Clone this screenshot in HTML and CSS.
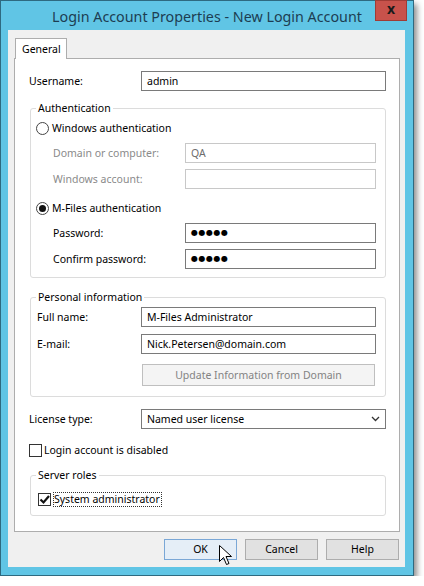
FILE: index.html
```html
<!DOCTYPE html>
<html lang="en">
<head>
  <meta charset="UTF-8" />
  <title>Login Account Properties - New Login Account</title>
  <link rel="stylesheet" href="styles.css">
</head>
<body>
  <div class="window">
    <div class="titlebar">
      <span class="title">Login Account Properties - New Login Account</span>
      <div class="close">x</div>
    </div>

    <div class="client">
      <div class="tabs"><div class="tab">General</div></div>

      <div class="panel">
        <div class="row">
          <span class="lbl">Username:</span>
          <div class="field">admin</div>
        </div>

        <div class="group auth">
          <div class="legend">Authentication</div>
          <div class="opt"><span class="radio"></span>Windows authentication</div>
          <div class="row sub off first">
            <span class="lbl">Domain or computer:</span>
            <div class="field">QA</div>
          </div>
          <div class="row sub off">
            <span class="lbl">Windows account:</span>
            <div class="field"></div>
          </div>
          <div class="opt second"><span class="radio on"></span>M-Files authentication</div>
          <div class="row sub first">
            <span class="lbl">Password:</span>
            <div class="field dots">●●●●●</div>
          </div>
          <div class="row sub">
            <span class="lbl">Confirm password:</span>
            <div class="field dots">●●●●●</div>
          </div>
        </div>

        <div class="group personal">
          <div class="legend">Personal information</div>
          <div class="row inner first">
            <span class="lbl">Full name:</span>
            <div class="field">M-Files Administrator</div>
          </div>
          <div class="row inner">
            <span class="lbl">E-mail:</span>
            <div class="field">Nick.Petersen@domain.com</div>
          </div>
          <div class="btn wide">Update Information from Domain</div>
        </div>

        <div class="row license">
          <span class="lbl">License type:</span>
          <div class="field select">
            Named user license
            <svg width="9" height="6" viewBox="0 0 9 6"><path d="M1 1l3.5 3.5L8 1" fill="none" stroke="#333" stroke-width="1.3"/></svg>
          </div>
        </div>

        <div class="check-row">
          <span class="box"></span>Login account is disabled
        </div>

        <div class="group roles">
          <div class="legend">Server roles</div>
          <div class="check-row inner-check">
            <span class="box">
              <svg width="11" height="11" viewBox="0 0 11 11"><path d="M1.5 5.5l3 3L10 2" fill="none" stroke="#111" stroke-width="2.2"/></svg>
            </span><span class="focus">System administrator</span>
          </div>
        </div>
      </div>

      <div class="buttons">
        <div class="btn ok">OK
          <svg class="cursor" width="13" height="21" viewBox="0 0 13 21"><path d="M0.5 0.5v16l4-4 3 7 2.5-1-3-7h5.5z" fill="#fff" stroke="#000" stroke-width="1"/></svg>
        </div>
        <div class="btn">Cancel</div>
        <div class="btn">Help</div>
      </div>
    </div>
  </div>
</body>
</html>
```

FILE: styles.css
```css
* { box-sizing: border-box; }
body {
  margin: 0;
  background: #fff;
  font-family: "Noto Sans", "Segoe UI", sans-serif;
  font-size: 10.5px;
  color: #000;
}
.window {
  width: 414px;
  height: 576px;
  border: 1px solid #2e6a80;
  background: #60c5e5;
  box-shadow: 3px 4px 6px rgba(0, 0, 0, 0.45);
  display: flex;
  flex-direction: column;
  align-items: flex-start;
}
.titlebar {
  position: relative;
  width: 100%;
  height: 29px;
  display: flex;
  align-items: center;
  justify-content: center;
}
.title {
  font-size: 14.3px;
  color: #1d3d52;
  padding-top: 1px;
}
.close {
  position: absolute;
  top: -1px;
  right: 6px;
  width: 32px;
  height: 21px;
  background: #c8524b;
  border: 1px solid #a03b35;
  color: #1a1a1a;
  font-weight: bold;
  font-size: 14px;
  line-height: 16px;
  text-align: center;
}
.client {
  margin-left: 7px;
  width: 397px;
  height: 537px;
  background: #f0f0f0;
  padding-top: 8px;
}
.tabs {
  display: flex;
  padding-left: 7px;
}
.tab {
  position: relative;
  width: 52px;
  height: 21px;
  margin-bottom: -1px;
  padding: 3px 0 0 6px;
  background: #fff;
  border: 1px solid #adadad;
  border-bottom: none;
}
.panel {
  margin-left: 6px;
  width: 386px;
  height: 474px;
  border: 1px solid #adadad;
  background: #fff;
  padding: 12px 13px 0 14px;
}
.row {
  display: flex;
  align-items: center;
  height: 20px;
}
.lbl {
  width: 112px;
  flex: none;
}
.field {
  flex: 1;
  height: 20px;
  border: 1px solid #7a7a7a;
  padding: 0 5px;
  line-height: 18px;
  background: #fff;
  white-space: nowrap;
}
.dots {
  font-family: "DejaVu Sans", sans-serif;
  font-size: 8px;
  letter-spacing: 0.5px;
  line-height: 17px;
}
.select {
  display: flex;
  align-items: center;
  justify-content: space-between;
  padding-right: 5px;
}
.group {
  border: 1px solid #dcdcdc;
  border-radius: 3px;
  margin-left: 1px;
}
.legend {
  width: max-content;
  margin: -9px 0 0 5px;
  padding: 0 2px;
  line-height: 16px;
  background: #fff;
}
.auth {
  margin-top: 17px;
  padding: 0 9px 8px 0;
}
.opt {
  display: flex;
  align-items: center;
  gap: 3px;
  height: 16px;
  margin: 4px 0 0 5px;
}
.opt.second { margin-top: 11px; }
.radio {
  width: 13px;
  height: 13px;
  border: 1px solid #444;
  border-radius: 50%;
  background: #fff;
  display: flex;
  align-items: center;
  justify-content: center;
}
.radio.on::after {
  content: "";
  width: 7px;
  height: 7px;
  border-radius: 50%;
  background: #111;
}
.sub {
  margin: 6px 0 0 22px;
}
.sub.first { margin-top: 7px; }
.sub .lbl { width: 132px; }
.off .lbl { color: #8a8a8a; }
.off .field {
  border-color: #c8c8c8;
  color: #6d6d6d;
}
.personal {
  margin-top: 19px;
  padding: 0 9px 10px 0;
}
.inner {
  margin: 7px 0 0 6px;
}
.inner.first { margin-top: 2px; }
.inner .lbl { width: 104px; }
.btn {
  width: 73px;
  height: 21px;
  border: 1px solid #adadad;
  background: #e1e1e1;
  text-align: center;
  line-height: 19px;
}
.btn.wide {
  width: auto;
  height: 22px;
  margin: 10px 1px 0 111px;
  background: #f4f4f4;
  border-color: #bfbfbf;
  color: #838383;
  line-height: 20px;
}
.license { margin-top: 12px; }
.check-row {
  display: flex;
  align-items: center;
  gap: 2px;
  height: 16px;
  margin-top: 13px;
}
.box {
  width: 13px;
  height: 13px;
  border: 1px solid #333;
  background: #fff;
  display: flex;
  align-items: center;
  justify-content: center;
}
.roles {
  margin-top: 17px;
  padding-bottom: 8px;
}
.inner-check {
  margin: 8px 0 0 7px;
}
.focus {
  border: 1px dotted #333;
  line-height: 13px;
  padding: 0 1px 0 0;
}
.buttons {
  display: flex;
  justify-content: flex-end;
  gap: 8px;
  margin-top: 7px;
  padding-right: 6px;
}
.btn.ok {
  position: relative;
  background: #e5eef7;
  border-color: #7aa7d6;
}
.cursor {
  position: absolute;
  left: 54px;
  top: 5px;
}
```
